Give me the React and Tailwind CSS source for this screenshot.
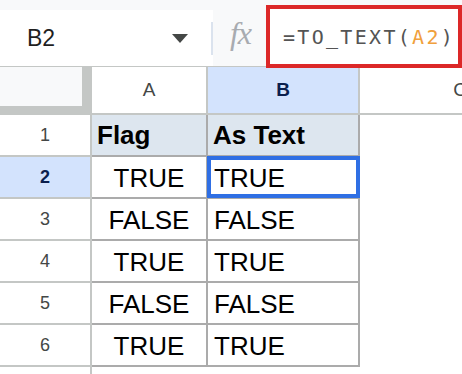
import React from 'react'

const rows = [
  { n: '2', a: 'TRUE', b: 'TRUE' },
  { n: '3', a: 'FALSE', b: 'FALSE' },
  { n: '4', a: 'TRUE', b: 'TRUE' },
  { n: '5', a: 'FALSE', b: 'FALSE' },
  { n: '6', a: 'TRUE', b: 'TRUE' },
]

function Toolbar() {
  return (
    <div className="flex h-[67px] bg-[#f8f9fa] border-b border-[#c4c7c5]">
      {/* name box */}
      <div className="mt-[10px] h-[56px] w-[213px] shrink-0 bg-white flex items-center pl-[27px]">
        <span className="text-[23px] text-[#1f1f1f]">B2</span>
        <svg className="ml-auto mt-[1px]" width="16" height="9" viewBox="0 0 16 9">
          <path d="M0 0 L16 0 L8 9 Z" fill="#444746" />
        </svg>
        <div className="ml-[23px] w-[2px] h-[33px] bg-[#dbe3ee]" />
      </div>
      {/* fx */}
      <div className="w-[53px] shrink-0 flex items-center justify-center pl-[2px]">
        <span className="font-['Liberation_Serif',serif] italic text-[32px] leading-none text-[#a8abb0] tracking-[-1px]">fx</span>
      </div>
      {/* formula box, outlined red */}
      <div className="relative z-10 flex-1 mt-[5px] h-[63px] border-[4px] border-[#dc2828] bg-white flex items-center pl-[13px]">
        <span className="font-['DejaVu_Sans_Mono',monospace] text-[20px] tracking-[2.3px] text-[#545454] whitespace-nowrap">
          =TO_TEXT(<span className="text-[#f0a03c]">A2</span>)
        </span>
      </div>
    </div>
  )
}

function HeaderRow() {
  return (
    <div className="flex h-[48px]">
      <div className="w-[92px] h-[48px] bg-[#c4c7c5] shrink-0">
        <div className="w-[82px] h-[39px] bg-[#f8f9fa]" />
      </div>
      <div className="w-[116px] shrink-0 bg-white border-r-2 border-b-2 border-[#c4c7c5] flex items-center justify-center text-[19px] text-[#444746]">
        A
      </div>
      <div className="w-[152px] shrink-0 bg-[#d3e3fd] border-r-2 border-b-2 border-[#c4c7c5] flex items-center justify-center text-[19px] font-bold text-[#0b1f4d]">
        B
      </div>
      <div className="w-[200px] shrink-0 bg-white border-b-2 border-[#c4c7c5] flex items-center justify-center text-[19px] text-[#444746]">
        C
      </div>
    </div>
  )
}

function RowHead({ n, active }) {
  return (
    <div
      className={
        'w-[92px] shrink-0 border-r-2 border-b-2 border-[#c4c7c5] flex items-center justify-center text-[18px] ' +
        (active ? 'bg-[#d3e3fd] font-bold text-[#0b1f4d]' : 'bg-white text-[#444746]')
      }
    >
      {n}
    </div>
  )
}

export default function App() {
  return (
    <div className="w-[462px] h-[374px] overflow-hidden bg-white font-['Liberation_Sans',Arial,sans-serif]">
      <Toolbar />
      <HeaderRow />

      {/* row 1 - table header */}
      <div className="flex h-[42px]">
        <RowHead n="1" />
        <div className="w-[116px] shrink-0 bg-[#dde6ef] border-r-2 border-b-2 border-[#ababab] flex items-center pl-[5px] pt-[1px] text-[26px] font-bold text-black">
          Flag
        </div>
        <div className="w-[152px] shrink-0 bg-[#dde6ef] border-r-2 border-b-2 border-[#ababab] flex items-center pl-[5px] pt-[1px] text-[26px] font-bold text-black">
          As Text
        </div>
      </div>

      {rows.map((r) => (
        <div key={r.n} className="flex h-[42px]">
          <RowHead n={r.n} active={r.n === '2'} />
          <div className="w-[116px] shrink-0 border-r-2 border-b-2 border-[#ababab] flex items-center justify-center pt-[2px] text-[26px] text-black">
            {r.a}
          </div>
          <div className="relative w-[152px] shrink-0 border-r-2 border-b-2 border-[#ababab] flex items-center pl-[6px] pt-[2px] text-[26px] text-black">
            {r.b}
            {r.n === '2' && (
              <div className="absolute -left-[1px] -top-[1px] -right-[2px] -bottom-[1px] border-[4px] border-[#2f6fe4]" />
            )}
          </div>
        </div>
      ))}

      {/* row 7, only its top edge shows */}
      <div className="flex h-[42px]">
        <div className="w-[92px] shrink-0 border-r-2 border-[#c4c7c5] bg-white" />
      </div>
    </div>
  )
}
